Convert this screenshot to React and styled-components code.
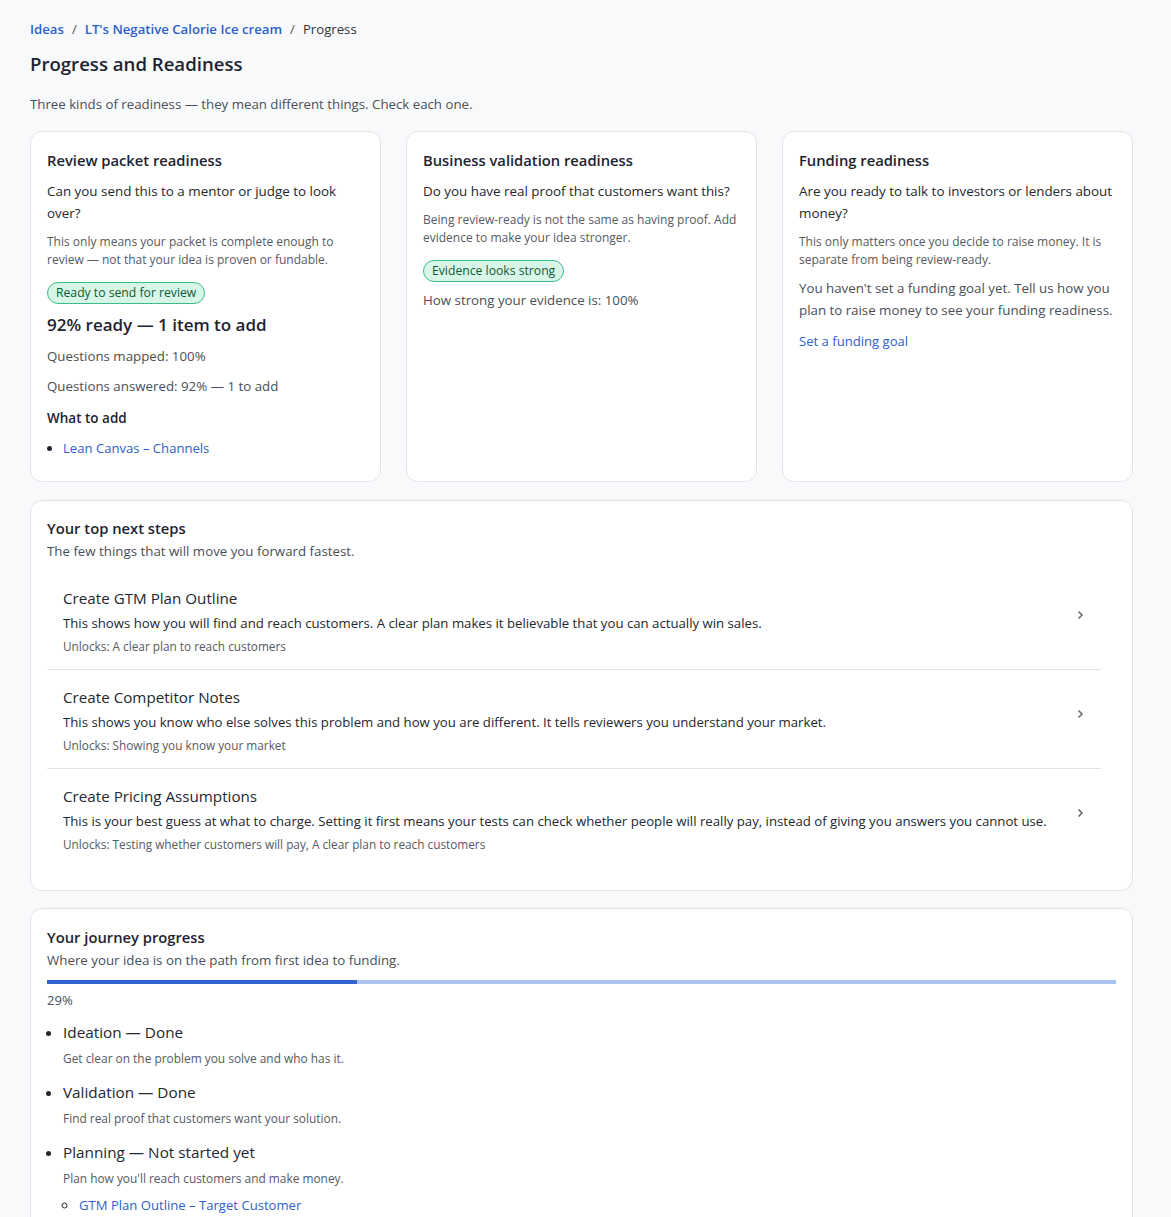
import styled, { createGlobalStyle } from 'styled-components'

const GlobalStyle = createGlobalStyle`
   body {
      margin: 0;
      background: #f8f9fb;
      font-family: "Open Sans", "Noto Sans", sans-serif;
      color: #1f2430;
   }
`

const Page = styled.div`
   padding: 20px 38px 40px 30px;
`
const Crumbs = styled.nav`
   display: flex;
   align-items: center;
   gap: 8px;
   font-size: 13.2px;
   line-height: 18px;
   color: #333;
`
const CrumbLink = styled.a`
   color: #2d5fcb;
   font-weight: 600;
   text-decoration: none;
`
const Sep = styled.span`
   color: #555;
`
const Title = styled.h1`
   margin: 13px 0 0;
   font-size: 18.6px;
   line-height: 26px;
   font-weight: 600;
   color: #1e2330;
`
const Lead = styled.p`
   margin: 17px 0 17px;
   font-size: 13.25px;
   line-height: 20px;
   color: #4a4f58;
`
const Grid = styled.div`
   display: grid;
   grid-template-columns: repeat(3, 1fr);
   gap: 25px;
   align-items: stretch;
`
const Card = styled.section`
   background: #fff;
   border: 1px solid #e1e4e8;
   border-radius: 12px;
   padding: 18px 16px 22px;
`
const Panel = styled(Card)`
   margin-top: ${p => p.$mt}px;
   padding-top: ${p => p.$pt}px;
   padding-bottom: 23px;
`
const CardTitle = styled.h2`
   margin: 0;
   font-size: 14.75px;
   line-height: 20px;
   font-weight: 600;
   color: #1e2330;
`
const Question = styled.p`
   margin: 10px 0 0;
   font-size: 13.4px;
   line-height: 22px;
   color: #23272f;
`
const Small = styled.p`
   margin: 9px 0 0;
   font-size: 12px;
   line-height: 18px;
   color: #555a63;
`
const Body = styled.p`
   margin: ${p => p.$mt ?? 8}px 0 0;
   font-size: 13.3px;
   line-height: 22px;
   color: #4a4f58;
`
const Badge = styled.div`
   width: fit-content;
   box-sizing: border-box;
   margin-top: 13px;
   padding: 0 8px;
   height: 22px;
   font-size: 12.2px;
   line-height: 20px;
   color: #10593a;
   background: #d8f6e7;
   border: 1px solid #3dbd8a;
   border-radius: 12px;
`
const Big = styled.div`
   margin-top: 9px;
   font-size: 17px;
   line-height: 24px;
   font-weight: 600;
   color: #1e2330;
`
const SubHead = styled.div`
   margin-top: 11px;
   font-size: 13.5px;
   line-height: 20px;
   font-weight: 600;
   color: #1e2330;
`
const Bullets = styled.ul`
   margin: ${p => p.$mt ?? 0}px 0 0;
   padding-left: 16px;
   font-size: 13.1px;
   line-height: 22px;

   ul {
      margin: 6px 0 0;
      padding-left: 16px;
      list-style: circle;
   }
`
const Link = styled.a`
   color: #2d5fcb;
   text-decoration: none;
   font-size: 13.1px;
`
const LinkLine = styled.div`
   margin-top: 8px;
   line-height: 22px;
`
const Steps = styled.div`
   margin: 9px 15px 0 0;
`
const Step = styled.div`
   display: flex;
   align-items: center;
   gap: 16px;
   padding: 16px 15px 14px 16px;
   border-bottom: ${p => (p.$last ? 'none' : '1px solid #e1e4e8')};
`
const StepText = styled.div`
   flex: 1;
`
const StepTitle = styled.div`
   font-size: 15.2px;
   line-height: 22px;
   color: #23272f;
`
const StepDesc = styled.div`
   margin-top: 4px;
   font-size: 13.2px;
   line-height: 20px;
   color: #23272f;
`
const StepUnlock = styled.div`
   margin-top: 4px;
   font-size: 11.8px;
   line-height: 18px;
   color: #555a63;
`
const ChevronBox = styled.span`
   display: flex;
   margin-bottom: 12px;
`
const Chevron = () => (
   <ChevronBox>
      <svg width="12" height="12" viewBox="0 0 12 12" fill="none" stroke="#666" strokeWidth="1.5">
         <path d="M4.5 2.5 8 6l-3.5 3.5" />
      </svg>
   </ChevronBox>
)
const Track = styled.div`
   margin-top: 9px;
   height: 4px;
   background: #a9c1ec;
`
const Fill = styled.div`
   height: 100%;
   background: #2f62cc;
`
const Percent = styled.div`
   margin-top: 7px;
   font-size: 13px;
   line-height: 18px;
   color: #4a4f58;
`
const Phase = styled.li`
   margin-top: 12px;
   font-size: 15.3px;
   line-height: 22px;
   color: #23272f;

   & + & {
      margin-top: 14px;
   }
`
const PhaseDesc = styled.div`
   margin-top: 6px;
   font-size: 11.9px;
   line-height: 18px;
   color: #555a63;
`

const steps = [
   {
      title: 'Create GTM Plan Outline',
      desc: 'This shows how you will find and reach customers. A clear plan makes it believable that you can actually win sales.',
      unlock: 'Unlocks: A clear plan to reach customers',
   },
   {
      title: 'Create Competitor Notes',
      desc: 'This shows you know who else solves this problem and how you are different. It tells reviewers you understand your market.',
      unlock: 'Unlocks: Showing you know your market',
   },
   {
      title: 'Create Pricing Assumptions',
      desc: 'This is your best guess at what to charge. Setting it first means your tests can check whether people will really pay, instead of giving you answers you cannot use.',
      unlock: 'Unlocks: Testing whether customers will pay, A clear plan to reach customers',
   },
]

const phases = [
   { name: 'Ideation — Done', desc: 'Get clear on the problem you solve and who has it.' },
   { name: 'Validation — Done', desc: 'Find real proof that customers want your solution.' },
   {
      name: 'Planning — Not started yet',
      desc: "Plan how you'll reach customers and make money.",
      items: ['GTM Plan Outline – Target Customer'],
   },
]

export default function App() {
   const progress = 29

   return (
      <>
         <GlobalStyle />
         <Page>
            <Crumbs>
               <CrumbLink href="#">Ideas</CrumbLink>
               <Sep>/</Sep>
               <CrumbLink href="#">LT's Negative Calorie Ice cream</CrumbLink>
               <Sep>/</Sep>
               <span>Progress</span>
            </Crumbs>
            <Title>Progress and Readiness</Title>
            <Lead>Three kinds of readiness — they mean different things. Check each one.</Lead>

            <Grid>
               <Card>
                  <CardTitle>Review packet readiness</CardTitle>
                  <Question>Can you send this to a mentor or judge to look over?</Question>
                  <Small>This only means your packet is complete enough to review — not that your idea is proven or fundable.</Small>
                  <Badge>Ready to send for review</Badge>
                  <Big>92% ready — 1 item to add</Big>
                  <Body>Questions mapped: 100%</Body>
                  <Body>Questions answered: 92% — 1 to add</Body>
                  <SubHead>What to add</SubHead>
                  <Bullets $mt={9}>
                     <li><Link href="#">Lean Canvas – Channels</Link></li>
                  </Bullets>
               </Card>
               <Card>
                  <CardTitle>Business validation readiness</CardTitle>
                  <Question>Do you have real proof that customers want this?</Question>
                  <Small>Being review-ready is not the same as having proof. Add evidence to make your idea stronger.</Small>
                  <Badge>Evidence looks strong</Badge>
                  <Body $mt={7}>How strong your evidence is: 100%</Body>
               </Card>
               <Card>
                  <CardTitle>Funding readiness</CardTitle>
                  <Question>Are you ready to talk to investors or lenders about money?</Question>
                  <Small>This only matters once you decide to raise money. It is separate from being review-ready.</Small>
                  <Body>You haven't set a funding goal yet. Tell us how you plan to raise money to see your funding readiness.</Body>
                  <LinkLine><Link href="#">Set a funding goal</Link></LinkLine>
               </Card>
            </Grid>

            <Panel $mt={18} $pt={17}>
               <CardTitle>Your top next steps</CardTitle>
               <Body $mt={2}>The few things that will move you forward fastest.</Body>
               <Steps>
                  {steps.map((s, i) => (
                     <Step key={s.title} $last={i === steps.length - 1}>
                        <StepText>
                           <StepTitle>{s.title}</StepTitle>
                           <StepDesc>{s.desc}</StepDesc>
                           <StepUnlock>{s.unlock}</StepUnlock>
                        </StepText>
                        <Chevron />
                     </Step>
                  ))}
               </Steps>
            </Panel>

            <Panel $mt={17} $pt={18}>
               <CardTitle>Your journey progress</CardTitle>
               <Body $mt={2}>Where your idea is on the path from first idea to funding.</Body>
               <Track>
                  <Fill style={{ width: `${progress}%` }} />
               </Track>
               <Percent>{progress}%</Percent>
               <Bullets>
                  {phases.map(p => (
                     <Phase key={p.name}>
                        {p.name}
                        <PhaseDesc>{p.desc}</PhaseDesc>
                        {p.items && (
                           <ul>
                              {p.items.map(it => (
                                 <li key={it}><Link href="#">{it}</Link></li>
                              ))}
                           </ul>
                        )}
                     </Phase>
                  ))}
               </Bullets>
            </Panel>
         </Page>
      </>
   )
}
